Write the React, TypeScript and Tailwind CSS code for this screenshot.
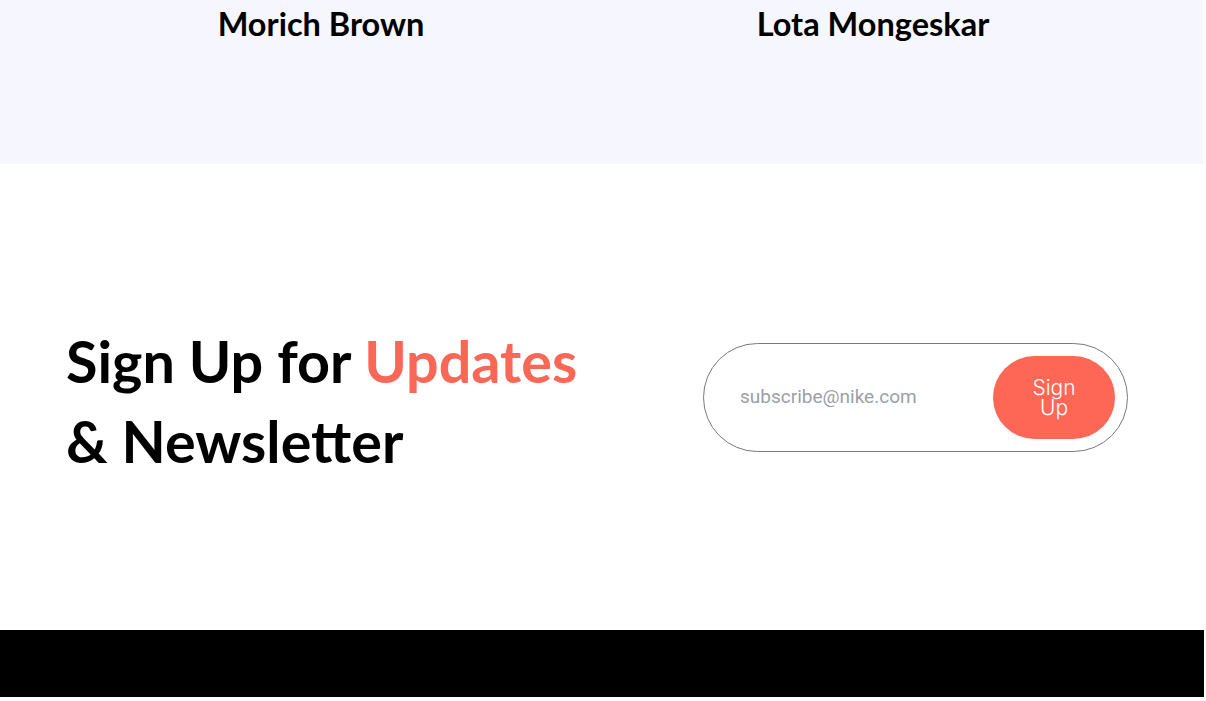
export default function App() {
  return (
    <div className="w-[1206px] h-[701px] overflow-hidden bg-white" style={{ fontFamily: "Lato, 'Open Sans', sans-serif" }}>
      <div className="w-[1204px]">
        {/* Testimonial names */}
        <section className="h-[164px] bg-[#f5f6fe] grid grid-cols-2">
          <div className="flex justify-center pl-[40px]">
            <h3 className="text-[32.5px] font-bold text-black leading-none pt-[8px]">Morich Brown</h3>
          </div>
          <div className="flex justify-center pr-[60px]">
            <h3 className="text-[32.5px] font-bold text-black leading-none pt-[8px]">Lota Mongeskar</h3>
          </div>
        </section>

        {/* Newsletter */}
        <section className="h-[466px] flex items-center justify-between pl-[66px] pr-[76px]">
          <h2 className="text-[57.5px] font-bold text-black leading-[80px] pt-[8px]">
            Sign Up for <span className="text-[#f96757]">Updates</span>
            <br />
            &amp; Newsletter
          </h2>
          <div className="w-[425px] h-[109px] rounded-full border-[1.5px] border-[#7a7a7a] flex items-center justify-between pl-[36px] pr-[12px]">
            <input
              className="outline-none bg-transparent w-[220px] text-[19px] text-gray-700 placeholder:text-[#9aa0a8]"
              style={{ fontFamily: "Roboto, sans-serif" }}
              placeholder="subscribe@nike.com"
            />
            <button
              className="w-[122px] h-[83px] rounded-full bg-[#fe6655] text-white text-[21px] font-light leading-[20px] px-[34px] pt-[2px]"
              style={{ fontFamily: "Inter, sans-serif" }}
            >
              Sign Up
            </button>
          </div>
        </section>

        {/* Footer */}
        <footer className="h-[67px] bg-black" />
      </div>
    </div>
  );
}
